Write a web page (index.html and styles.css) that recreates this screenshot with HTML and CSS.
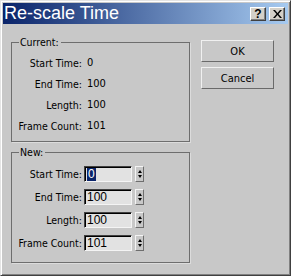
FILE: index.html
```html
<!DOCTYPE html>
<html lang="en">
<head>
<meta charset="UTF-8">
<title>Re-scale Time</title>
<link rel="stylesheet" href="styles.css">
</head>
<body>

<div class="window">
    <!-- Title bar -->
    <div class="titlebar">
        <span class="title">Re-scale Time</span>
        <div class="caption-buttons">
            <div class="cap-btn">?</div>
            <div class="cap-btn close">
                <svg width="9" height="8" viewBox="0 0 9 8">
                    <path d="M0 0h2l2.5 3 2.5-3h2l-3.5 4 3.5 4h-2l-2.5-3-2.5 3h-2l3.5-4z" fill="#000"/>
                </svg>
            </div>
        </div>
    </div>

    <div class="content">
        <div class="groups">
            <div class="group current">
                <span class="legend">Current:</span>
                <div class="row"><span class="label">Start Time:</span><span class="value">0</span></div>
                <div class="row"><span class="label">End Time:</span><span class="value">100</span></div>
                <div class="row"><span class="label">Length:</span><span class="value">100</span></div>
                <div class="row"><span class="label">Frame Count:</span><span class="value">101</span></div>
            </div>

            <div class="group new">
                <span class="legend">New:</span>
                <div class="row">
                    <span class="label">Start Time:</span>
                    <div class="field"><span class="selected">0</span></div>
                    <div class="spinner"><span class="up"></span><span class="down"></span></div>
                </div>
                <div class="row">
                    <span class="label">End Time:</span>
                    <div class="field">100</div>
                    <div class="spinner"><span class="up"></span><span class="down"></span></div>
                </div>
                <div class="row">
                    <span class="label">Length:</span>
                    <div class="field">100</div>
                    <div class="spinner"><span class="up"></span><span class="down"></span></div>
                </div>
                <div class="row">
                    <span class="label">Frame Count:</span>
                    <div class="field">101</div>
                    <div class="spinner"><span class="up"></span><span class="down"></span></div>
                </div>
            </div>
        </div>

        <div class="buttons">
            <div class="button">OK</div>
            <div class="button">Cancel</div>
        </div>
    </div>
</div>

</body>
</html>
```

FILE: styles.css
```css
body {
    margin: 0;
    background-color: #c8c8c8;
    font-family: "DejaVu Sans Condensed", "Liberation Sans", Arial, sans-serif;
}

.window {
    width: 291px;
    height: 276px;
    box-sizing: border-box;
    background-color: #c8c8c8;
    border-top: 1px solid #e4e4e4;
    border-left: 1px solid #e4e4e4;
    border-right: 1px solid #404040;
    border-bottom: 1px solid #404040;
    box-shadow: inset 1px 1px 0 #ffffff, inset -1px -1px 0 #808080;
    padding: 2px;
    display: flex;
    flex-direction: column;
}

/* Title bar */
.titlebar {
    height: 21px;
    display: flex;
    align-items: center;
    justify-content: space-between;
    background: linear-gradient(to right, #0a246a, #a6caf0);
    padding: 0 3px 0 1px;
}

.title {
    color: white;
    font-family: "Liberation Sans", Arial, sans-serif;
    font-size: 18px;
    line-height: 21px;
}

.caption-buttons {
    display: flex;
    gap: 3px;
}

.cap-btn {
    width: 16px;
    height: 14px;
    box-sizing: border-box;
    background-color: #d4d0c8;
    border-top: 1px solid #ffffff;
    border-left: 1px solid #ffffff;
    border-right: 1px solid #404040;
    border-bottom: 1px solid #404040;
    box-shadow: inset -1px -1px 0 #808080;
    display: flex;
    align-items: center;
    justify-content: center;
    font-family: "Liberation Sans", Arial, sans-serif;
    font-weight: bold;
    font-size: 12px;
    line-height: 12px;
}

/* Main area */
.content {
    display: flex;
    padding: 16px 0 0 8px;
}

.groups {
    display: flex;
    flex-direction: column;
    gap: 10px;
    margin-top: 2px;
    width: 179px;
}

.group {
    position: relative;
    border: 1px solid #6e6e6e;
    box-shadow: 1px 1px 0 #dcdcdc;
    font-size: 10.5px;
    color: black;
}

.group.current {
    padding: 9px 0 5px 0;
}

.group.new {
    padding: 9px 0 8px 0;
}

.legend {
    position: absolute;
    top: -7px;
    left: 7px;
    padding: 0 2px 0 1px;
    background-color: #c8c8c8;
    line-height: 13px;
}

.row {
    display: flex;
    align-items: center;
}

.current .row {
    height: 21px;
}

.new .row {
    height: 23px;
}

.label {
    width: 70px;
    text-align: right;
}

.value {
    margin-left: 5px;
    font-size: 11px;
}

.field {
    margin-left: 2px;
    width: 48px;
    height: 16px;
    box-sizing: border-box;
    background-color: #e2e2e2;
    border-top: 1px solid #404040;
    border-left: 1px solid #404040;
    border-right: 1px solid #f4f4f4;
    border-bottom: 1px solid #f4f4f4;
    box-shadow: inset 1px 1px 0 #000000;
    font-family: "Liberation Sans", Arial, sans-serif;
    font-size: 12px;
    line-height: 14px;
    padding-left: 2px;
}

.selected {
    display: inline-block;
    background-color: #0a246a;
    color: white;
    line-height: 13px;
    padding: 0 1px;
}

.spinner {
    margin-left: 3px;
    width: 9px;
    height: 16px;
    box-sizing: border-box;
    border-top: 1px solid #f4f4f4;
    border-left: 1px solid #f4f4f4;
    border-right: 1px solid #6e6e6e;
    border-bottom: 1px solid #6e6e6e;
    display: flex;
    flex-direction: column;
    align-items: center;
    justify-content: center;
    gap: 2px;
}

.spinner .up {
    width: 0;
    height: 0;
    border-left: 2.5px solid transparent;
    border-right: 2.5px solid transparent;
    border-bottom: 3px solid #000;
}

.spinner .down {
    width: 0;
    height: 0;
    border-left: 2.5px solid transparent;
    border-right: 2.5px solid transparent;
    border-top: 3px solid #000;
}

/* Dialog buttons */
.buttons {
    display: flex;
    flex-direction: column;
    gap: 5px;
    margin-left: 11px;
}

.button {
    width: 73px;
    height: 22px;
    box-sizing: border-box;
    border-top: 1px solid #f0f0f0;
    border-left: 1px solid #f0f0f0;
    border-right: 1px solid #6a6a6a;
    border-bottom: 1px solid #6a6a6a;
    display: flex;
    align-items: center;
    justify-content: center;
    font-size: 11px;
}
```
